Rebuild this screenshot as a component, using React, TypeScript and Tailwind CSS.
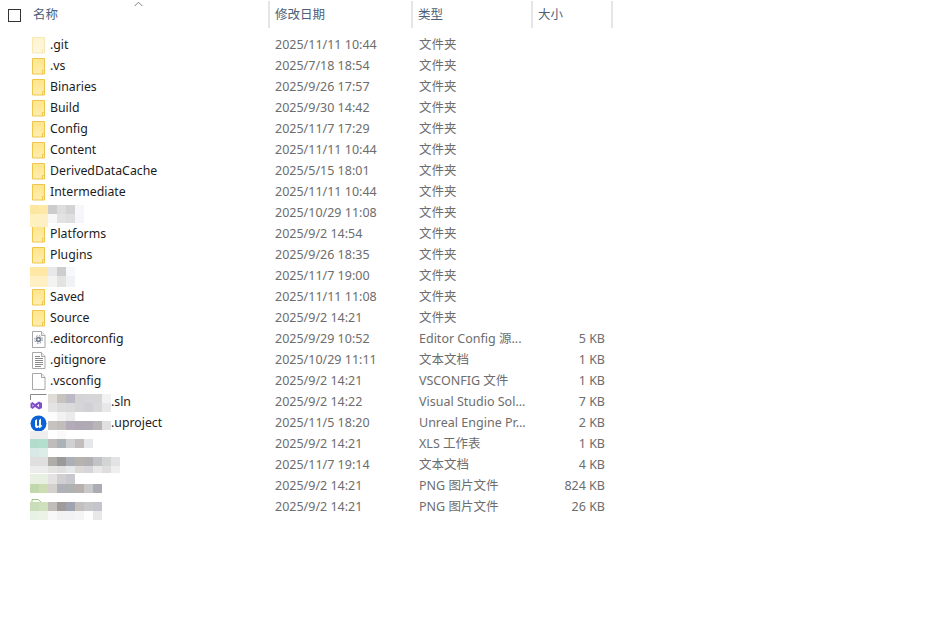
import React from 'react';

type Row = {
  icon?: 'folder' | 'faded' | 'config' | 'text' | 'blank' | 'vs' | 'unreal';
  name?: string;
  nameClass?: string;
  date: string;
  kind: string;
  size?: string;
};

const rows: Row[] = [
  { icon: 'faded', name: '.git', date: '2025/11/11 10:44', kind: '文件夹' },
  { icon: 'folder', name: '.vs', date: '2025/7/18 18:54', kind: '文件夹' },
  { icon: 'folder', name: 'Binaries', date: '2025/9/26 17:57', kind: '文件夹' },
  { icon: 'folder', name: 'Build', date: '2025/9/30 14:42', kind: '文件夹' },
  { icon: 'folder', name: 'Config', date: '2025/11/7 17:29', kind: '文件夹' },
  { icon: 'folder', name: 'Content', date: '2025/11/11 10:44', kind: '文件夹' },
  { icon: 'folder', name: 'DerivedDataCache', date: '2025/5/15 18:01', kind: '文件夹' },
  { icon: 'folder', name: 'Intermediate', date: '2025/11/11 10:44', kind: '文件夹' },
  { date: '2025/10/29 11:08', kind: '文件夹' },
  { icon: 'folder', name: 'Platforms', date: '2025/9/2 14:54', kind: '文件夹' },
  { icon: 'folder', name: 'Plugins', date: '2025/9/26 18:35', kind: '文件夹' },
  { date: '2025/11/7 19:00', kind: '文件夹' },
  { icon: 'folder', name: 'Saved', date: '2025/11/11 11:08', kind: '文件夹' },
  { icon: 'folder', name: 'Source', date: '2025/9/2 14:21', kind: '文件夹' },
  { icon: 'config', name: '.editorconfig', date: '2025/9/29 10:52', kind: 'Editor Config 源...', size: '5 KB' },
  { icon: 'text', name: '.gitignore', date: '2025/10/29 11:11', kind: '文本文档', size: '1 KB' },
  { icon: 'blank', name: '.vsconfig', date: '2025/9/2 14:21', kind: 'VSCONFIG 文件', size: '1 KB' },
  { icon: 'vs', name: '.sln', nameClass: 'ml-[65px]', date: '2025/9/2 14:22', kind: 'Visual Studio Sol...', size: '7 KB' },
  { icon: 'unreal', name: '.uproject', nameClass: 'ml-[65px]', date: '2025/11/5 18:20', kind: 'Unreal Engine Pr...', size: '2 KB' },
  { date: '2025/9/2 14:21', kind: 'XLS 工作表', size: '1 KB' },
  { date: '2025/11/7 19:14', kind: '文本文档', size: '4 KB' },
  { date: '2025/9/2 14:21', kind: 'PNG 图片文件', size: '824 KB' },
  { date: '2025/9/2 14:21', kind: 'PNG 图片文件', size: '26 KB' },
];

function FolderIcon({ faded }: { faded?: boolean }) {
  return (
    <svg width="14" height="17" viewBox="0 0 14 17" className={faded ? 'opacity-40' : ''}>
      <defs>
        <linearGradient id="fold" x1="0" y1="0" x2="0" y2="1">
          <stop offset="0" stopColor="#ffe48a" />
          <stop offset="1" stopColor="#ffeeb0" />
        </linearGradient>
      </defs>
      <path d="M.5.5h12v15.5H.5z" fill="url(#fold)" stroke="#eec64c" />
      <path d="M10.5 16v-3.5h2" fill="#fff3c4" stroke="#eec64c" />
    </svg>
  );
}

function DocIcon({ children }: { children?: React.ReactNode }) {
  return (
    <svg width="14" height="17" viewBox="0 0 14 17">
      <path d="M.5.5h9l3.5 4v12H.5z" fill="#fff" stroke="#a8a8a8" />
      <path d="M9.5.5v4H13" fill="#f0f0f0" stroke="#a8a8a8" />
      {children}
    </svg>
  );
}

function RowIcon({ icon }: { icon: NonNullable<Row['icon']> }) {
  if (icon === 'folder') return <FolderIcon />;
  if (icon === 'faded') return <FolderIcon faded />;
  if (icon === 'blank') return <DocIcon />;
  if (icon === 'text')
    return (
      <DocIcon>
        <path d="M3 4.5h5M3 6.5h8M3 8.5h8M3 10.5h8M3 12.5h8M3 14.5h6" stroke="#8a8a8a" fill="none" />
      </DocIcon>
    );
  if (icon === 'config')
    return (
      <DocIcon>
        <circle cx="6.5" cy="8.5" r="2.8" fill="#76828e" />
        <circle cx="6.5" cy="8.5" r="3.8" fill="none" stroke="#76828e" strokeWidth="1" strokeDasharray="1.5 1.5" />
        <circle cx="6.5" cy="8.5" r="1.1" fill="#fff" />
      </DocIcon>
    );
  if (icon === 'vs')
    return (
      <svg width="18" height="17" viewBox="0 0 18 17" className="ml-[-2px]">
        <path d="M.5 6V.5h16" fill="none" stroke="#8a8a8a" />
        <path d="M.5 9.5l2-1.5 2.5 2L9 7.5l3 1.5v5l-3 1.5-4-2.5-2.5 2-2-1.5zM2.5 10.5v2.2l1.3-1.1zM9 10l-2 1.5L9 13z" fill="#7f4fc9" fillRule="evenodd" />
      </svg>
    );
  return (
    <svg width="18" height="17" viewBox="0 0 18 17" className="ml-[-2px]">
      <circle cx="8.5" cy="8.5" r="8" fill="#0a62d6" />
      <path d="M5 5.5l2-1.5v6q0 1 1 1 .8 0 1-.7V5l2-1.5v7l1.5-.8q-1 3-3 3.6L8.7 12q-.9 1.4-2.2 1-1.5-.6-1.5-2z" fill="#fff" />
    </svg>
  );
}

// 打码色块
function Mosaic({ className, lines }: { className: string; lines: { h: string; cells: string[] }[] }) {
  return (
    <div className={`absolute ${className}`}>
      {lines.map((line, i) => (
        <div key={i} className={`flex ${line.h}`}>
          {line.cells.map((c, j) => (
            <div key={j} className={`w-[9px] ${c}`} />
          ))}
        </div>
      ))}
    </div>
  );
}

function HeaderCell({ className, label }: { className: string; label: string }) {
  return (
    <div className={`flex items-center h-[27px] mt-px pt-[2px] border-r-2 border-[#e5e5e5] text-[#4c607a] ${className}`}>
      {label}
    </div>
  );
}

export default function App() {
  return (
    <div className="relative w-full h-[619px] bg-white overflow-hidden text-[12.5px] font-['Noto_Sans','Noto_Sans_CJK_SC',sans-serif]">
      <div className="flex">
        <div className="relative w-[270px] flex items-center h-[27px] mt-px pt-[2px] border-r-2 border-[#e5e5e5] text-[#4c607a]">
          <span className="w-[13px] h-[13px] ml-2 border border-[#333] box-border" />
          <span className="ml-3">名称</span>
          <svg width="9" height="6" viewBox="0 0 9 6" className="absolute left-[134px] top-0">
            <path d="M.7 5L4.5 1.2 8.3 5" fill="none" stroke="#808080" />
          </svg>
        </div>
        <HeaderCell className="w-[143px] pl-[5px]" label="修改日期" />
        <HeaderCell className="w-[120px] pl-[5px]" label="类型" />
        <HeaderCell className="w-[80px] pl-[5px]" label="大小" />
      </div>

      <div className="mt-[7px]">
        {rows.map((r, i) => (
          <div key={i} className="flex items-center h-[21px] text-[#6d6d6d]">
            <div className="flex items-center w-[275px] pl-[32px] text-[12.3px] text-[#1c1c1c]">
              <div className="w-[14px] h-[17px] shrink-0">{r.icon && <RowIcon icon={r.icon} />}</div>
              {r.name && <span className={r.nameClass ?? 'ml-[4px]'}>{r.name}</span>}
            </div>
            <div className="w-[144px]">{r.date}</div>
            <div className="w-[120px] whitespace-nowrap">{r.kind}</div>
            <div className="w-[66px] text-right">{r.size}</div>
          </div>
        ))}
      </div>

      <Mosaic
        className="left-[30px] top-[205px]"
        lines={[
          { h: 'h-[9px]', cells: ['bg-[#fde6a0]', 'bg-[#fde8a8]', 'bg-[#cccccc]', 'bg-[#dddddd]', 'bg-[#d3d3d3]', 'bg-[#f6f7fa]'] },
          { h: 'h-[9px]', cells: ['bg-[#fff0c0]', 'bg-[#fef0c4]', 'bg-[#f8f8f8]', 'bg-[#e2e2e2]', 'bg-[#dedede]', 'bg-[#f5f6f9]'] },
          { h: 'h-[4px]', cells: ['bg-[#fff0c0]', 'bg-[#fef0c4]'] },
        ]}
      />
      <Mosaic
        className="left-[30px] top-[267px]"
        lines={[
          { h: 'h-[9px]', cells: ['bg-[#ffe8a6]', 'bg-[#ffe8a6]', 'bg-[#e8e8e8]', 'bg-[#cdcdd0]', 'bg-[#f7f8fb]'] },
          { h: 'h-[11px]', cells: ['bg-[#fff0c4]', 'bg-[#fff0c4]', 'bg-[#f3f3f1]', 'bg-[#e3e3e3]', 'bg-[#f1f2f5]'] },
        ]}
      />
      <Mosaic
        className="left-[48px] top-[394px]"
        lines={[
          { h: 'h-[9px]', cells: ['bg-[#e0dcd8]', 'bg-[#c6c3c0]', 'bg-[#bcb9c4]', 'bg-[#d5d4d4]', 'bg-[#d6d6da]', 'bg-[#d8d5d8]', 'bg-[#f2f2f2]'] },
          { h: 'h-[9px]', cells: ['bg-[#e3e3e3]', 'bg-[#dcdcdc]', 'bg-[#dadada]', 'bg-[#d5d5d8]', 'bg-[#cfd1d4]', 'bg-[#d8d8da]', 'bg-[#e8e8e8]'] },
          { h: 'h-[9px]', cells: ['bg-[#fcfcfc]', 'bg-[#f2f2f2]', 'bg-[#ebebeb]', 'bg-white', 'bg-white', 'bg-white', 'bg-white'] },
          { h: 'h-[9px]', cells: ['bg-[#c5c2c0]', 'bg-[#c0bdbd]', 'bg-[#b3acb8]', 'bg-[#b0a9b5]', 'bg-[#b0aab4]', 'bg-[#b8b4b8]', 'bg-[#e0e0e0]'] },
        ]}
      />
      <Mosaic
        className="left-[30px] top-[431px]"
        lines={[
          { h: 'h-[8px]', cells: ['bg-[#eeeeee]', 'bg-[#eeeeee]', 'bg-white', 'bg-[#f9f9f9]'] },
          { h: 'h-[9px]', cells: ['bg-[#b3dccc]', 'bg-[#b3dfce]', 'bg-[#c0bcbc]', 'bg-[#a9b3b8]', 'bg-[#d0d0d2]', 'bg-[#c0bdbc]', 'bg-[#e6e7ea]'] },
          { h: 'h-[9px]', cells: ['bg-[#d8e8e4]', 'bg-[#dcece6]'] },
          { h: 'h-[9px]', cells: ['bg-[#dfdfdf]', 'bg-[#dfdfdf]', 'bg-[#b0aca8]', 'bg-[#9a9a9a]', 'bg-[#aab0b5]', 'bg-[#b8b2ae]', 'bg-[#b3b0b3]', 'bg-[#c0c4c8]', 'bg-[#d3d5d5]', 'bg-[#e3e3e5]'] },
          { h: 'h-[7px]', cells: ['bg-[#ececec]', 'bg-[#ececec]', 'bg-[#e4e4e2]', 'bg-[#e0e0e0]', 'bg-[#e6e8ea]', 'bg-[#dcdad8]', 'bg-[#d6d6da]', 'bg-[#e8e8e8]', 'bg-[#dedede]', 'bg-[#eeeeee]'] },
        ]}
      />
      <Mosaic
        className="left-[30px] top-[474px]"
        lines={[
          { h: 'h-[10px]', cells: ['bg-[#e8f0e2]', 'bg-[#e8f0e2]', 'bg-[#e4e2e2]', 'bg-[#d0d0d2]', 'bg-[#c8c8ce]'] },
          { h: 'h-[9px]', cells: ['bg-[#c0d8ac]', 'bg-[#ccdcb4]', 'bg-[#d4d0cc]', 'bg-[#b0b0b8]', 'bg-[#b0b2b2]', 'bg-[#b8b0ac]', 'bg-[#c8c8c8]', 'bg-[#acacb4]'] },
        ]}
      />
      <Mosaic
        className="left-[30px] top-[502px]"
        lines={[
          { h: 'h-[9px]', cells: ['bg-[#c8deb8]', 'bg-[#d0e0bc]', 'bg-[#c0bcb8]', 'bg-[#a09a9a]', 'bg-[#a0a4b0]', 'bg-[#c4c0be]', 'bg-[#c8c8ca]', 'bg-[#c4c4cc]'] },
          { h: 'h-[9px]', cells: ['bg-[#e8f2e4]', 'bg-[#ecf2e6]', 'bg-[#f8f8f8]', 'bg-[#f2f2f2]', 'bg-[#f2f2f4]', 'bg-[#f4f4f4]', 'bg-[#fdfdfd]', 'bg-[#e8e8e8]'] },
        ]}
      />
      <svg width="14" height="4" viewBox="0 0 14 4" className="absolute left-[31px] top-[498px]">
        <path d="M1 4V1.5h6L10 4" fill="none" stroke="#9cc27e" />
      </svg>
    </div>
  );
}
